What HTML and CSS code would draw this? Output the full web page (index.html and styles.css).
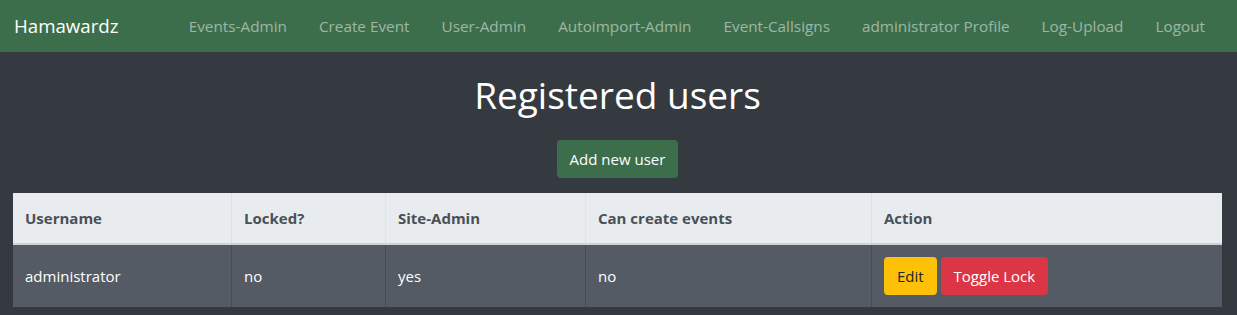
FILE: index.html
```html
<!DOCTYPE html>
<html lang="en">
<head>
  <meta charset="UTF-8" />
  <title>Hamawardz - User-Admin</title>
  <link rel="stylesheet" href="styles.css">
</head>
<body>
  <!-- Top navigation -->
  <nav class="navbar">
    <a class="brand" href="#">Hamawardz</a>
    <ul class="nav-links">
      <li><a href="#">Events-Admin</a></li>
      <li><a href="#">Create Event</a></li>
      <li><a href="#">User-Admin</a></li>
      <li><a href="#">Autoimport-Admin</a></li>
      <li><a href="#">Event-Callsigns</a></li>
      <li><a href="#">administrator Profile</a></li>
      <li><a href="#">Log-Upload</a></li>
      <li><a href="#">Logout</a></li>
    </ul>
  </nav>

  <main class="content">
    <h1 class="title">Registered users</h1>
    <div class="actions">
      <a class="btn btn-green" href="#">Add new user</a>
    </div>

    <!-- Users table -->
    <table class="users">
      <thead>
        <tr>
          <th class="col-user">Username</th>
          <th class="col-locked">Locked?</th>
          <th class="col-admin">Site-Admin</th>
          <th class="col-create">Can create events</th>
          <th>Action</th>
        </tr>
      </thead>
      <tbody>
        <tr>
          <td>administrator</td>
          <td>no</td>
          <td>yes</td>
          <td>no</td>
          <td>
            <a class="btn btn-yellow" href="#">Edit</a>
            <a class="btn btn-red" href="#">Toggle Lock</a>
          </td>
        </tr>
      </tbody>
    </table>
  </main>
</body>
</html>
```

FILE: styles.css
```css
/* ====== Page ====== */
body {
  margin: 0;
  background: #343a40;
  color: #fff;
  font-family: "Open Sans", "Noto Sans", Arial, sans-serif;
  font-size: 15px;
  line-height: 24px;
}
a {
  text-decoration: none;
}

/* ====== Navbar ====== */
.navbar {
  display: flex;
  align-items: center;
  justify-content: space-between;
  height: 52px;
  padding: 0 16px 0 14px;
  background: #3c6e4b;
  box-sizing: border-box;
}
.brand {
  color: #fff;
  font-size: 18.7px;
}
.nav-links {
  display: flex;
  margin: 0;
  padding: 0;
  list-style: none;
}
.nav-links a {
  display: block;
  padding: 8px 16px;
  color: rgba(255, 255, 255, 0.5);
  font-size: 15.3px;
}

/* ====== Content ====== */
.content {
  padding: 0 15px 0 13px;
}
.title {
  margin: 19px 0 21px;
  font-size: 37px;
  font-weight: 400;
  line-height: 48px;
  text-align: center;
}
.actions {
  text-align: center;
  margin-bottom: 15px;
}

/* ====== Buttons ====== */
.btn {
  display: inline-block;
  padding: 6px 12px;
  border-radius: 4px;
  font-size: 15px;
  line-height: 24px;
  border: 1px solid transparent;
}
.btn-green {
  background: #3c6e4b;
  color: #fff;
}
.btn-yellow {
  background: #ffc107;
  color: #212529;
}
.btn-red {
  background: #dc3545;
  color: #fff;
}

/* ====== Table ====== */
.users {
  width: 100%;
  border-collapse: collapse;
  background: #545b64;
}
.users th,
.users td {
  padding: 12px;
  text-align: left;
  vertical-align: middle;
}
.users th {
  padding: 13px 12px;
  background: #e9ecef;
  color: #495057;
  font-weight: 700;
  border-left: 1px solid #dee2e6;
  border-bottom: 2px solid #ced3d8;
}
.users td {
  border-left: 1px solid #454d55;
}
.users th:first-child,
.users td:first-child {
  border-left: none;
}
.col-user { width: 194px; }
.col-locked { width: 129px; }
.col-admin { width: 175px; }
.col-create { width: 261px; }
```
